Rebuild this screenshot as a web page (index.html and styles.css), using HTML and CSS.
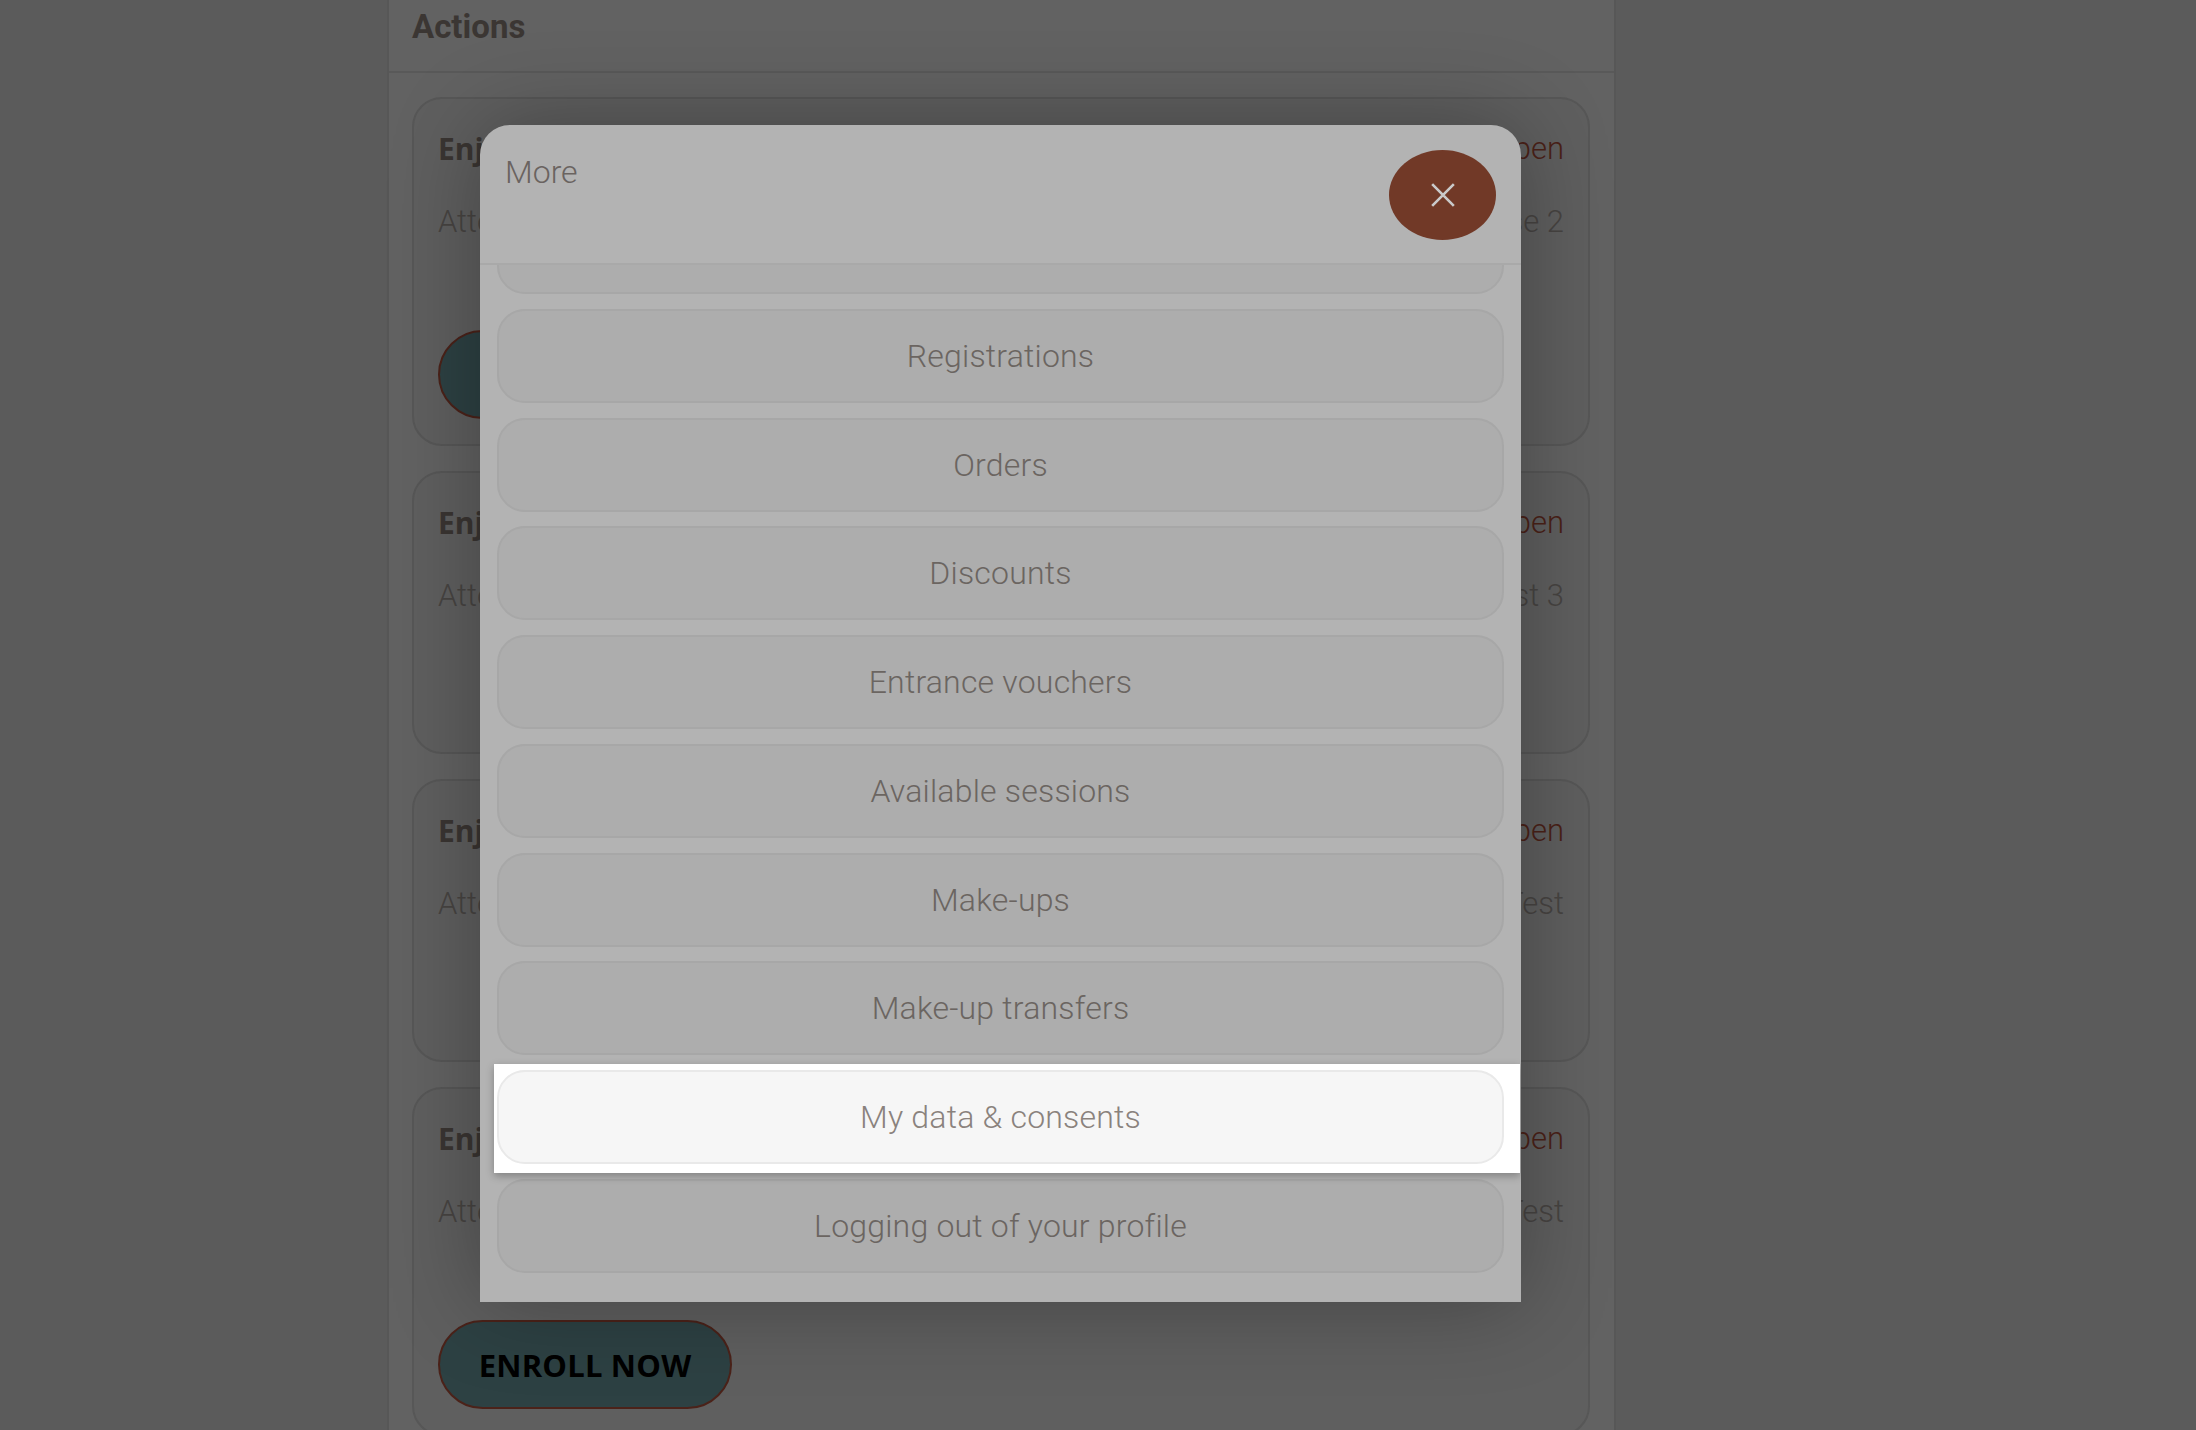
FILE: index.html
```html
<!DOCTYPE html>
<html lang="en">
<head>
<meta charset="utf-8">
<title>More</title>
<link rel="stylesheet" href="styles.css">
</head>
<body>
<div class="layout">
  <main class="column">
    <header class="section-head"><h2 class="section-title">Actions</h2></header>
    <div class="cards">
      <article class="card card-tall">
        <div class="row"><span class="title">Enjoy</span><span class="status">Open</span></div>
        <div class="row row-sub"><span class="sub">Attendance</span><span class="sub">Course 2</span></div>
        <button class="enroll">ENROLL NOW</button>
      </article>
      <article class="card card-short">
        <div class="row"><span class="title">Enjoy</span><span class="status">Open</span></div>
        <div class="row row-sub"><span class="sub">Attendance</span><span class="sub">Test 3</span></div>
      </article>
      <article class="card card-short">
        <div class="row"><span class="title">Enjoy</span><span class="status">Open</span></div>
        <div class="row row-sub"><span class="sub">Attendance</span><span class="sub">Test</span></div>
      </article>
      <article class="card card-tall">
        <div class="row"><span class="title">Enjoy</span><span class="status">Open</span></div>
        <div class="row row-sub"><span class="sub">Attendance</span><span class="sub">Test</span></div>
        <button class="enroll">ENROLL NOW</button>
      </article>
    </div>
  </main>
</div>

<div class="modal" role="dialog" aria-label="More">
  <div class="modal-head">
    <span class="modal-title">More</span>
    <button class="close" aria-label="Close">
      <svg width="26" height="26" viewBox="0 0 24 24" aria-hidden="true">
        <path d="M2 2 L22 22 M22 2 L2 22" stroke="#c9c9c9" stroke-width="2.4" fill="none"/>
      </svg>
    </button>
  </div>
  <div class="modal-list">
    <div class="item item-peek"><button class="menu-btn" aria-label="My profile"></button></div>
    <div class="item"><button class="menu-btn">Registrations</button></div>
    <div class="item"><button class="menu-btn">Orders</button></div>
    <div class="item"><button class="menu-btn">Discounts</button></div>
    <div class="item"><button class="menu-btn">Entrance vouchers</button></div>
    <div class="item"><button class="menu-btn">Available sessions</button></div>
    <div class="item"><button class="menu-btn">Make-ups</button></div>
    <div class="item"><button class="menu-btn">Make-up transfers</button></div>
    <div class="item item-spot"><button class="menu-btn menu-btn-active">My data &amp; consents</button></div>
    <div class="item"><button class="menu-btn">Logging out of your profile</button></div>
  </div>
</div>
</body>
</html>
```

FILE: styles.css
```css
html, body {
  margin: 0;
  padding: 0;
  height: 100%;
}

body {
  background: #5b5b5b;
  font-family: Roboto, "Liberation Sans", sans-serif;
  overflow: hidden;
}

.layout {
  display: flex;
  min-height: 1430px;
}

.column {
  margin-left: 387px;
  width: 1229px;
  box-sizing: border-box;
  background: #626262;
  border-left: 2px solid #575757;
  border-right: 2px solid #575757;
}

.section-head {
  height: 73px;
  box-sizing: border-box;
  border-bottom: 2px solid #595959;
  padding: 8px 0 0 23px;
}

.section-title {
  margin: 0;
  font-family: Roboto, "Liberation Sans", sans-serif;
  font-weight: 700;
  font-size: 33px;
  line-height: 38px;
  color: #3b3633;
}

.cards {
  display: flex;
  flex-direction: column;
  gap: 25px;
  padding: 24px 24px 0 23px;
}

.card {
  box-sizing: border-box;
  border: 2px solid #575757;
  border-radius: 30px;
  background: #5f5f5f;
  padding: 27px 24px 25px 24px;
  display: flex;
  flex-direction: column;
  align-items: flex-start;
}

.card-short {
  min-height: 283px;
}

.row {
  width: 100%;
  display: flex;
  justify-content: space-between;
  align-items: center;
  height: 44px;
}

.row-sub {
  margin-top: 29px;
}

.title {
  font-family: "Open Sans", "Liberation Sans", sans-serif;
  font-weight: 700;
  font-size: 30px;
  color: #3a3532;
}

.status {
  font-family: Roboto, "Liberation Sans", sans-serif;
  font-weight: 300;
  font-size: 31px;
  color: #4a2117;
}

.sub {
  font-family: Roboto, "Liberation Sans", sans-serif;
  font-weight: 300;
  font-size: 31px;
  color: #474442;
}

.enroll {
  margin-top: 87px;
  width: 294px;
  height: 89px;
  box-sizing: border-box;
  border: 2px solid #4b2219;
  border-radius: 45px;
  background: #2d4143;
  color: #000;
  font-family: "Open Sans", "Liberation Sans", sans-serif;
  font-weight: 700;
  font-size: 31px;
  letter-spacing: 0.2px;
  padding: 0;
}

/* modal */
.modal {
  position: absolute;
  left: 480px;
  top: 125px;
  width: 1041px;
  height: 1177px;
  background: #b3b3b3;
  border-radius: 30px 30px 0 0;
  box-shadow: 0 0 90px rgba(0, 0, 0, 0.3);
  display: flex;
  flex-direction: column;
  overflow: hidden;
}

.modal-head {
  height: 140px;
  flex: none;
  box-sizing: border-box;
  border-bottom: 2px solid #a9a9a9;
  display: flex;
  justify-content: space-between;
  align-items: flex-start;
  padding: 25px 25px 0 25px;
}

.modal-title {
  margin-top: 3px;
  font-weight: 300;
  font-size: 32px;
  line-height: 38px;
  color: #6a6360;
}

.close {
  width: 107px;
  height: 90px;
  border: none;
  border-radius: 50%;
  background: #713927;
  display: flex;
  align-items: center;
  justify-content: center;
  padding: 0;
}

.close svg {
  width: 26px;
  height: 26px;
}

.modal-list {
  flex: 1;
  overflow: hidden;
  display: flex;
  flex-direction: column;
  gap: 14.75px;
  padding: 0 17px 29px 17px;
}

.item {
  flex: none;
}

.item-peek {
  margin-top: -65px;
}

.item-spot {
  margin: -6px -16px -9px -3px;
  padding: 6px 16px 9px 3px;
  background: #ffffff;
  box-shadow: 0 3px 8px rgba(0, 0, 0, 0.28);
  position: relative;
  z-index: 2;
}

.menu-btn {
  display: block;
  width: 100%;
  height: 94px;
  box-sizing: border-box;
  border: 2px solid #a7a7a7;
  border-radius: 28px;
  background: #adadad;
  color: #6b6561;
  font-family: Roboto, "Liberation Sans", sans-serif;
  font-weight: 300;
  font-size: 32px;
  letter-spacing: 0.2px;
  padding: 0;
}

.menu-btn-active {
  background: #f6f6f6;
  border-color: #e9e9e9;
  color: #8a827d;
}
```
